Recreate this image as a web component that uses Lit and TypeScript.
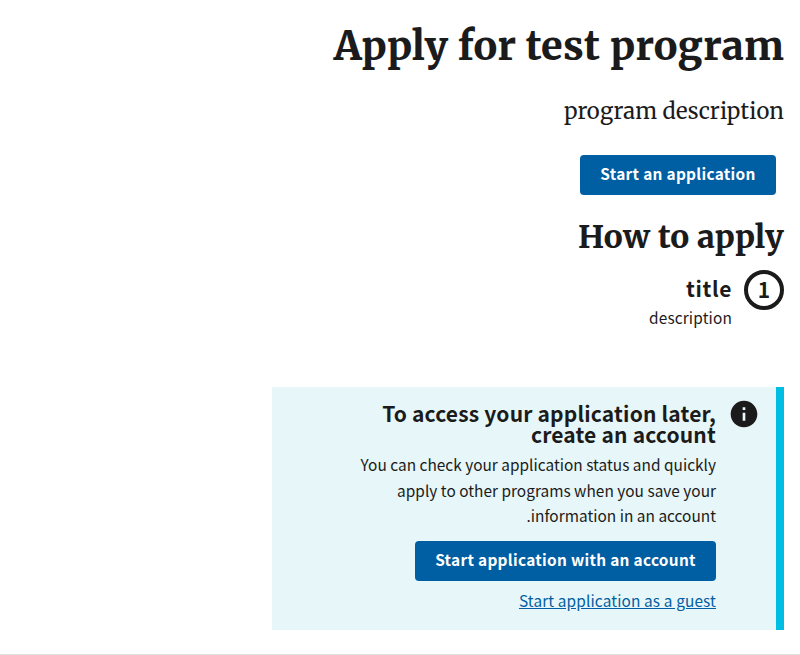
import { LitElement, html, css } from "lit";
import { customElement } from "lit/decorators.js";

@customElement("app-root")
export class AppRoot extends LitElement {
  static styles = css`
    :host {
      display: block;
      height: 655px;
      overflow: hidden;
      background: #fff;
      color: #1b1b1b;
      font-family: "Noto Sans CJK SC", sans-serif;
      font-size: 15.4px;
      line-height: 25.4px;
      letter-spacing: 0;
    }
    * { box-sizing: border-box; }
    h1, h2, h3, p { margin: 0; white-space: nowrap; }
    main {
      height: 655px;
      padding: 20px 16px 0;
      border-bottom: 1px solid #dfe1e2;
      display: flex;
      flex-direction: column;
      align-items: flex-start;
    }
    .serif { font-family: Merriweather, "DejaVu Serif Condensed", "DejaVu Serif", serif; }
    h1 { font-size: 39.5px; line-height: 52px; font-weight: 800; letter-spacing: 0.22px; }
    .lead { font-size: 22px; line-height: 36px; margin-top: 21px; letter-spacing: 0.1px; }
    .button {
      display: block;
      height: 40px;
      border: 0;
      border-radius: 4px;
      padding: 0 0 3px;
      background: #005ea2;
      color: #fff;
      font: inherit;
      font-weight: 700;
      line-height: 37px;
      letter-spacing: 0.3px;
      white-space: nowrap;
    }
    .start { width: 196px; margin: 26px 8px 0; }
    h2 { font-size: 31.5px; line-height: 40px; margin-top: 22px; font-weight: 800; letter-spacing: 0.2px; }
    .step { display: flex; gap: 12px; margin-top: 13px; }
    .number {
      width: 40px;
      height: 40px;
      border: 4px solid #1b1b1b;
      border-radius: 50%;
      font-size: 21px;
      font-weight: 700;
      line-height: 31px;
      text-align: center;
    }
    h3 { font-size: 21px; line-height: 21px; letter-spacing: 0.18px; }
    .step h3 { margin-top: 8px; letter-spacing: 0.6px; }
    .step p { margin-top: 6px; letter-spacing: 0.15px; }
    .alert {
      width: 512px;
      height: 243px;
      margin-top: 57px;
      border-right: 8px solid #00bde3;
      background: #e7f6f8;
      display: flex;
      gap: 12px;
      padding: 11px 16px 0 0;
    }
    .icon { width: 32px; height: 32px; flex: none; fill: #1b1b1b; }
    .content { padding-top: 5px; }
    .body { margin-top: 7px; letter-spacing: 0.02px; }
    .account { width: 301px; margin-top: 12px; }
    .guest { display: block; width: max-content; margin-top: 7px; letter-spacing: 0.13px; color: #005ea2; text-decoration: underline; white-space: nowrap; }
  `;

  render() {
    return html`
      <main dir="rtl">
        <h1 class="serif">Apply for test program</h1>
        <p class="lead serif">program description</p>
        <button class="button start">Start an application</button>
        <h2 class="serif">How to apply</h2>
        <div class="step">
          <div class="number">1</div>
          <div>
            <h3>title</h3>
            <p>description</p>
          </div>
        </div>
        <section class="alert">
          <svg class="icon" viewBox="0 0 24 24" aria-hidden="true">
            <path d="M12 2C6.48 2 2 6.48 2 12s4.48 10 10 10 10-4.48 10-10S17.52 2 12 2zm1 15h-2v-6h2v6zm0-8h-2V7h2v2z" />
          </svg>
          <div class="content">
            <h3>To access your application later,&lrm;<br />create an account</h3>
            <p class="body">
              You can check your application status and quickly<br />apply to other programs when you save your<br />information in an account.
            </p>
            <button class="button account">Start application with an account</button>
            <a class="guest">Start application as a guest</a>
          </div>
        </section>
      </main>
    `;
  }
}
